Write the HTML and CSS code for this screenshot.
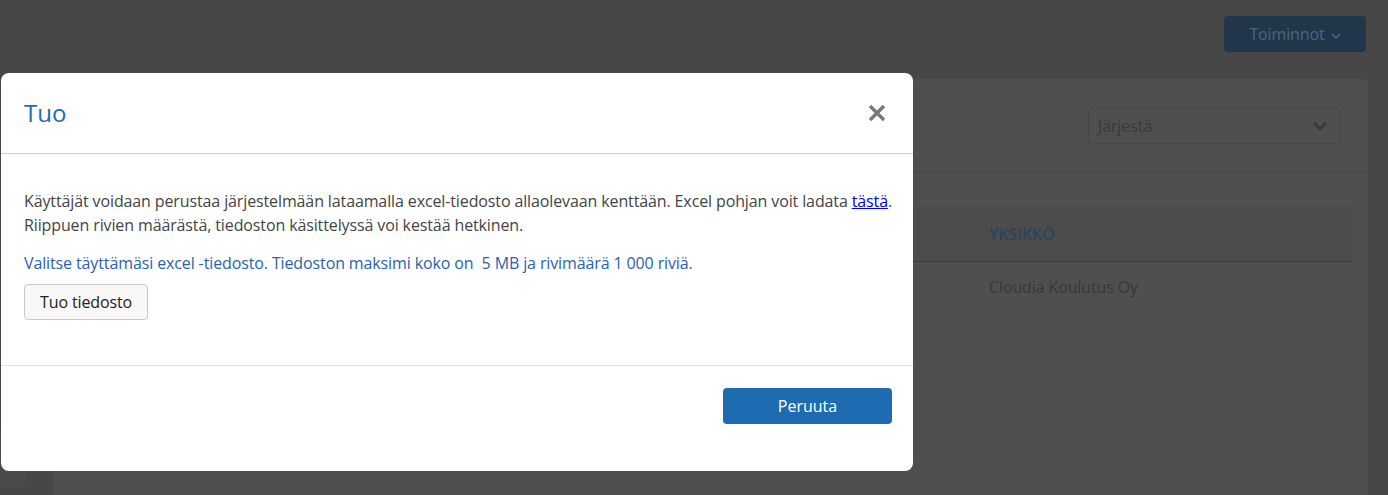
FILE: index.html
```html
<!DOCTYPE html>
<html>
<head>
    <title>Käyttäjät</title>
    <meta name="viewport" content="width=device-width, initial-scale=1.0">
    <link rel="stylesheet" href="styles.css">
</head>
<body>
    <div class="page">
        <div class="topbar">
            <button class="actions">Toiminnot <svg class="caret" width="10" height="6" viewBox="0 0 10 6"><path d="M1 1l4 4 4-4" fill="none" stroke="#4b6681" stroke-width="1.6"/></svg></button>
        </div>
        <div class="main">
            <div class="rail"><div class="rail-item"></div></div>
            <div class="card">
                <div class="card-tools">
                    <div class="select">
                        <span>Järjestä</span>
                        <svg width="16" height="10" viewBox="0 0 16 10"><path d="M2 2l6 6 6-6" fill="none" stroke="#3a3a3a" stroke-width="3"/></svg>
                    </div>
                </div>
                <table class="list">
                    <thead>
                        <tr><th class="col-name"></th><th>YKSIKKÖ</th></tr>
                    </thead>
                    <tbody>
                        <tr><td class="col-name"></td><td>Cloudia Koulutus Oy</td></tr>
                    </tbody>
                </table>
            </div>
        </div>
    </div>

    <div class="modal">
        <div class="modal-header">
            <h2>Tuo</h2>
            <svg class="close" width="20" height="20" viewBox="0 0 20 20"><path d="M3 3l14 14M17 3L3 17" stroke="#777" stroke-width="3.4"/></svg>
        </div>
        <div class="modal-body">
            <p class="intro">Käyttäjät voidaan perustaa järjestelmään lataamalla excel-tiedosto allaolevaan kenttään. Excel pohjan voit ladata <a href="#">tästä</a>. Riippuen rivien määrästä, tiedoston käsittelyssä voi kestää hetkinen.</p>
            <p class="info">Valitse täyttämäsi excel -tiedosto. Tiedoston maksimi koko on&nbsp; 5 MB ja rivimäärä 1 000 riviä.</p>
            <button class="file-btn">Tuo tiedosto</button>
        </div>
        <div class="modal-footer">
            <button class="primary">Peruuta</button>
        </div>
    </div>
</body>
</html>
```

FILE: styles.css
```css
html, body {
    margin: 0;
    height: 100%;
    overflow: hidden;
    font-family: "Open Sans", "Noto Sans", sans-serif;
    background-color: #474747;
}

.page {
    display: flex;
    flex-direction: column;
    height: 100%;
}

.topbar {
    display: flex;
    justify-content: flex-end;
    padding: 16px 22px 0 0;
}

.actions {
    width: 142px;
    height: 36px;
    border: none;
    border-radius: 4px;
    background-color: #22364b;
    color: #4b6681;
    font-family: inherit;
    font-size: 16px;
    letter-spacing: -0.12px;
}
.caret {
    margin-left: 2px;
    vertical-align: middle;
}

.main {
    display: flex;
    flex: 1;
    margin-top: 27px;
}

.rail {
    width: 53px;
    display: flex;
    flex-direction: column;
    justify-content: flex-end;
    padding-bottom: 7px;
    box-sizing: border-box;
}
.rail-item {
    width: 26px;
    height: 60px;
    background-color: #4b4b4b;
    border-radius: 0 0 6px 0;
}

.card {
    flex: 1;
    margin-right: 20px;
    background-color: #4f4f4f;
    border-radius: 6px 6px 0 0;
}

.card-tools {
    display: flex;
    justify-content: flex-end;
    padding: 29px 28px 0 0;
    height: 64px;
    border-bottom: 1px solid #474747;
}

.select {
    width: 252px;
    height: 36px;
    box-sizing: border-box;
    border: 1px solid #464646;
    border-radius: 4px;
    display: flex;
    align-items: center;
    justify-content: space-between;
    padding: 0 11px 0 9px;
    color: #3a3a3a;
    font-size: 16px;
    letter-spacing: -0.12px;
}

.list {
    margin: 34px 16px 0 16px;
    width: calc(100% - 32px);
    border-collapse: collapse;
    font-size: 16px;
    letter-spacing: -0.12px;
}
.list th, .list td {
    padding: 0;
    text-align: left;
}
.list th {
    height: 54px;
    background-color: #4c4c4c;
    color: #2a4360;
    font-weight: 600;
    border-bottom: 1px solid #3b3b3b;
}
.list td {
    height: 55px;
    padding-bottom: 5px;
    box-sizing: border-box;
    color: #383838;
    border-bottom: 1px solid #4a4a4a;
}
.col-name {
    width: 920px;
}

.modal {
    position: absolute;
    top: 73px;
    left: 1px;
    width: 912px;
    background-color: white;
    border-radius: 8px;
}

.modal-header {
    display: flex;
    align-items: center;
    justify-content: space-between;
    padding: 24px 26px 24px 23px;
    border-bottom: 1px solid #cfcfcf;
}
.modal-header h2 {
    margin: 0;
    font-size: 24px;
    line-height: 32px;
    font-weight: 400;
    color: #1f6bb2;
}

.modal-body {
    padding: 35px 14px 45px 23px;
    border-bottom: 1px solid #e2e2e2;
    letter-spacing: -0.12px;
}
.intro {
    margin: 0;
    font-size: 16px;
    line-height: 24px;
    color: #444;
}
.intro a {
    color: #0000ee;
}
.info {
    margin: 14px 0 9px 0;
    font-size: 16px;
    line-height: 24px;
    color: #2c62ad;
}

.file-btn {
    height: 36px;
    padding: 0 15px;
    border: 1px solid #c8c8c8;
    border-radius: 4px;
    background-color: #f8f8f8;
    color: #222;
    font-family: inherit;
    font-size: 16px;
    letter-spacing: -0.12px;
}

.modal-footer {
    display: flex;
    justify-content: flex-end;
    padding: 22px 21px 47px 0;
}
.primary {
    width: 169px;
    height: 36px;
    border: none;
    border-radius: 4px;
    background-color: #1e6bb1;
    color: white;
    font-family: inherit;
    font-size: 16px;
}
```
